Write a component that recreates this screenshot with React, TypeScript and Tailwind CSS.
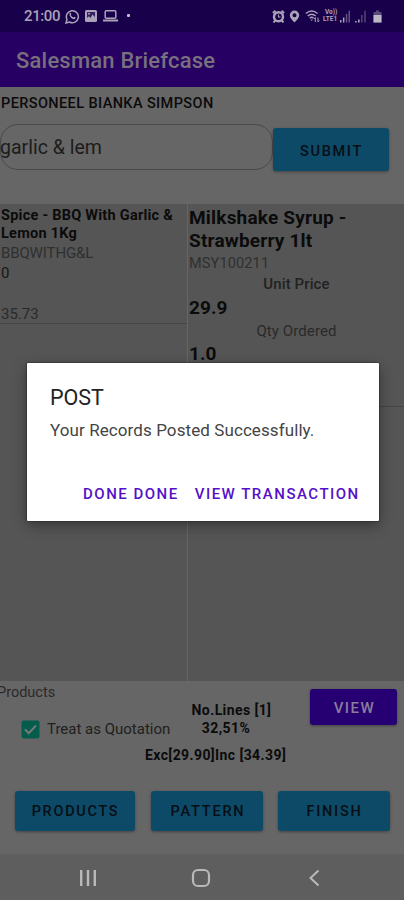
import React from "react";

function StatusBar() {
  return (
    <header className="flex h-8 shrink-0 items-center bg-[#18004b] pl-[24px] pr-[22px] text-[#aaa3b8]">
      <span className="w-[41px] text-[15px] font-medium leading-8 tracking-[-0.4px]">21:00</span>
      <svg className="h-[15px] w-[15px]" viewBox="0 0 15 15" fill="none" stroke="currentColor" strokeWidth="1.5">
        <path d="M1 14l1-3.6A6 6 0 1 1 4.5 13z" />
        <path d="M4.7 4.2c.5-.8 1.2-.5 1.6.9l-.5 1c.7 1.3 1.4 1.9 2.6 2.4l.9-.8c1.5.6 1.7 1 1 1.7C8.200 12 3.600 7.200 4.700 4.200z" fill="currentColor" stroke="none" />
      </svg>
      <svg className="ml-[5px] h-[12px] w-[12px]" viewBox="0 0 12 12">
        <rect width="12" height="12" rx="1.500" fill="currentColor" />
        <path d="M2 2h8v5L7.500 4.500 5.500 8 3.800 6.200 2 8z" fill="#18004b" opacity=".8" />
        <circle cx="4" cy="3.700" r="1" fill="currentColor" />
      </svg>
      <svg className="ml-[6px] h-[12px] w-[15px]" viewBox="0 0 15 12" fill="none" stroke="currentColor" strokeWidth="1.500">
        <rect x="2.200" y=".8" width="10.600" height="7.400" rx="1" />
        <path d="M0 10.500h15" strokeWidth="2" />
      </svg>
      <span className="mb-[2px] ml-[9px] h-[3px] w-[3px] rounded-[1px] bg-[#c5c0cf]" />
      <div className="ml-auto flex items-center">
        <svg className="h-[13px] w-[13px]" viewBox="0 0 13 13" fill="none" stroke="currentColor">
          <circle cx="6.500" cy="6.800" r="4.500" strokeWidth="2.400" />
          <path d="M.8 3L3.500.8M12.200 3L9.500.8M1.500 12.500l2-2.300M11.500 12.500l-2-2.300" strokeWidth="2" />
          <path d="M6.500 4.500V7H8.500" strokeWidth="1.100" />
        </svg>
        <svg className="ml-[4px] h-[13px] w-[11px]" viewBox="0 0 11 13">
          <path fillRule="evenodd" d="M5.500.5a4.700 4.700 0 0 1 4.700 4.700c0 3-4.700 7.300-4.700 7.300S.8 8.200.8 5.200A4.700 4.700 0 0 1 5.500.5zm0 2.700a2 2 0 1 0 0 4 2 2 0 0 0 0-4z" fill="currentColor" />
        </svg>
        <svg className="ml-[5px] h-[13px] w-[15px]" viewBox="0 0 15 13" fill="none" stroke="currentColor" strokeWidth="1.400">
          <path d="M.8 3.500Q6.700-1.500 12.600 3.500M2.700 6Q6.700 2.500 10.600 6M4.700 8.200Q6.700 6.500 8.600 8.200" />
          <path d="M5.500 9.500h2.400L6.700 11z" fill="currentColor" stroke="none" />
          <path d="M10.300 12V7.500M9 9l1.300-1.500M13 7.500V12M14.300 10.500L13 12" strokeWidth="1" />
        </svg>
        <span className="ml-[3px] flex w-[17px] flex-col text-[6.5px] font-bold leading-[7px]">
          <span className="pl-[2px]">Vo))</span>
          <span>LTE1</span>
        </span>
        <svg className="h-[13px] w-[10px]" viewBox="0 0 10 13" fill="currentColor">
          <path d="M0 10h1.500v2.500H0zM2.900 7.500h1.500v5H2.900z" />
          <path d="M5.800 4h1.500v8.500H5.800zM8.500.8H10v11.700H8.500z" opacity=".5" />
        </svg>
        <svg className="ml-[5px] h-[13px] w-[11px]" viewBox="0 0 11 13" fill="currentColor">
          <path d="M0 11h1.600v1.500H0zM3 9.500h1.600v3H3z" />
          <path d="M6 5h1.600v7.500H6zM9.200.8h1.600v11.700H9.200z" opacity=".4" />
        </svg>
        <svg className="ml-[7px] h-[13px] w-[9px]" viewBox="0 0 9 13">
          <path d="M3 .5h3V2h2.500v10.500H.500V2H3z" fill="#5b4b7b" />
          <path d="M.500 5h8v7.500h-8z" fill="#bdb7c7" />
        </svg>
      </div>
    </header>
  );
}

const blueButton =
  "flex items-center justify-center rounded-[3px] bg-[#0c4a68] text-[14.5px] font-medium text-[#080e14] shadow-[0_1px_3px_rgba(0,0,0,0.35)]";

export default function App() {
  return (
    <div className="relative flex h-[900px] w-[404px] flex-col overflow-hidden bg-[#666666] font-[Roboto,'Noto_Sans',sans-serif] text-[#0b0b0b]">
      <StatusBar />
      <div className="flex h-[55px] shrink-0 items-center bg-[#270063] pl-4 pt-[2px] text-[22px] font-medium text-[#77707d]">
        <span className="tracking-[0.2px]">Salesman Briefcase</span>
      </div>

      <section className="h-[117px] shrink-0 pt-[7px]">
        <p className="whitespace-nowrap pl-px pt-px text-[14.5px] font-medium leading-[18px] tracking-[0.4px]">PERSONEEL BIANKA SIMPSON</p>
        <div className="mt-[10px] flex items-start">
          <div className="mt-[0.5px] flex h-[46px] w-[273px] items-center rounded-[18px] border-[1.500px] border-[#494949] pt-[2px] text-[19.5px] text-[#1c1c1c]">
            <span className="-ml-px">garlic &amp; lem</span>
          </div>
          <button className={`${blueButton} mt-[5px] h-[43px] w-[116px] pl-px pt-[4px] tracking-[1.7px]`}>SUBMIT</button>
        </div>
      </section>

      <main className="flex h-[477px] shrink-0 bg-[#555555]">
        <section className="w-[188px] shrink-0 border-r border-[#666666]">
          <div className="flex h-[120px] flex-col border-b border-[#464646] pl-px pt-[3px]">
            <h2 className="whitespace-nowrap text-[14.5px] font-bold leading-[18px] tracking-[0.25px]">Spice - BBQ With Garlic &amp;<br />Lemon 1Kg</h2>
            <p className="mt-px text-[15px] leading-[18px] tracking-[-0.1px] text-[#2f2f2f]">BBQWITHG&amp;L</p>
            <p className="mt-[2px] text-[15px] leading-[18px] text-[#151515]">0</p>
            <p className="mt-auto text-[15px] leading-[18px] text-[#2a2a2a]">35.73</p>
          </div>
        </section>
        <section className="flex-1">
          <div className="flex h-[203px] flex-col border-b border-[#464646] pl-px pt-[2px]">
            <h2 className="text-[19px] font-bold leading-[23px] tracking-[0.2px]">Milkshake Syrup -<br />Strawberry 1lt</h2>
            <p className="mt-[3px] text-[14.5px] leading-[18px] tracking-[0.15px] text-[#2f2f2f]">MSY100211</p>
            <p className="mt-[2px] text-center text-[15px] font-medium leading-[19px] tracking-[0.1px] text-[#222222]">Unit Price</p>
            <p className="text-[19px] font-bold leading-[27px] tracking-[0.1px]">29.9</p>
            <p className="text-center text-[15px] leading-[20px] tracking-[0.1px] text-[#2a2a2a]">Qty Ordered</p>
            <p className="text-[19px] font-bold leading-[26px]">1.0</p>
          </div>
        </section>
      </main>

      <footer className="flex h-[173px] shrink-0 flex-col">
        <div className="flex h-[105px]">
          <div className="w-[145px] shrink-0 pt-[3px]">
            <p className="-ml-[3px] text-[14.5px] leading-[18px] text-[#2a2a2a]">Products</p>
            <label className="mt-[17px] flex items-center pl-[21px]">
              <svg className="mr-[7px] h-[19px] w-[19px] shrink-0" viewBox="0 0 19 19">
                <rect x=".5" y=".5" width="18" height="18" rx="2" fill="#045c4d" />
                <path d="M4 9.300l3.700 3.900L15 5.500" fill="none" stroke="#777" strokeWidth="2" />
              </svg>
              <span className="whitespace-nowrap text-[15px] leading-[20px] text-[#202020]">Treat as Quotation</span>
            </label>
          </div>
          <div className="w-[165px] shrink-0 pt-[20px] text-[14px] font-bold leading-[18px] tracking-[0.4px]">
            <p className="pl-[8px] text-center">No.Lines [1]</p>
            <p className="pr-[3px] text-center">32,51%</p>
            <p className="mt-[9px] whitespace-nowrap">Exc[29.90]Inc [34.39]</p>
          </div>
          <button className="mt-[8px] flex h-[36px] w-[87px] items-center justify-center rounded-[3px] bg-[#260073] pl-[2px] pt-[2px] text-[15px] font-medium tracking-[1.5px] text-[#8a7d9c] shadow-[0_1px_3px_rgba(0,0,0,0.35)]">VIEW</button>
        </div>
        <div className="flex pl-[15px] pt-[5px]">
          <button className={`${blueButton} h-[40px] w-[120px] pl-px pt-[2px] tracking-[1.7px]`}>PRODUCTS</button>
          <button className={`${blueButton} ml-[16px] h-[40px] w-[112px] pl-[2px] pt-[2px] tracking-[1.8px]`}>PATTERN</button>
          <button className={`${blueButton} ml-[15px] h-[40px] w-[112px] pl-px pt-[2px] tracking-[1.7px]`}>FINISH</button>
        </div>
      </footer>

      <nav className="flex h-[46px] shrink-0 items-center bg-[#5e5e5e] pl-[79px] pt-[2px] text-[#b9b9b9]">
        <svg className="h-[18px] w-[18px]" viewBox="0 0 18 18" fill="none" stroke="currentColor" strokeWidth="2.400">
          <path d="M2.200 1v16M9 1v16M15.800 1v16" />
        </svg>
        <svg className="ml-[94px] h-[20px] w-[20px]" viewBox="0 0 20 20" fill="none" stroke="currentColor" strokeWidth="2.200">
          <rect x="2" y="2" width="16" height="16" rx="5" />
        </svg>
        <svg className="ml-[97px] h-[18px] w-[12px]" viewBox="0 0 12 18" fill="none" stroke="currentColor" strokeWidth="2">
          <path d="M10.500 1.500L2.500 9l8 7.500" />
        </svg>
      </nav>

      <div role="dialog" className="absolute left-[27px] top-[363px] flex h-[158px] w-[352px] flex-col rounded-[1px] bg-white px-[23px] pt-[20px] shadow-[0_4px_14px_rgba(0,0,0,0.4),0_0_2px_rgba(0,0,0,0.7)]">
        <h1 className="text-[21.5px] leading-[29px] text-[#222222]">POST</h1>
        <p className="mt-[7px] whitespace-nowrap text-[17px] leading-[22px] tracking-[0.09px] text-[#444444]">Your Records Posted Successfully.</p>
        <div className="mt-[43px] flex gap-[16px] whitespace-nowrap pl-[33px] text-[15px] font-medium leading-[20px] tracking-[1.5px] text-[#5410c8]">
          <button>DONE DONE</button>
          <button>VIEW TRANSACTION</button>
        </div>
      </div>
    </div>
  );
}
